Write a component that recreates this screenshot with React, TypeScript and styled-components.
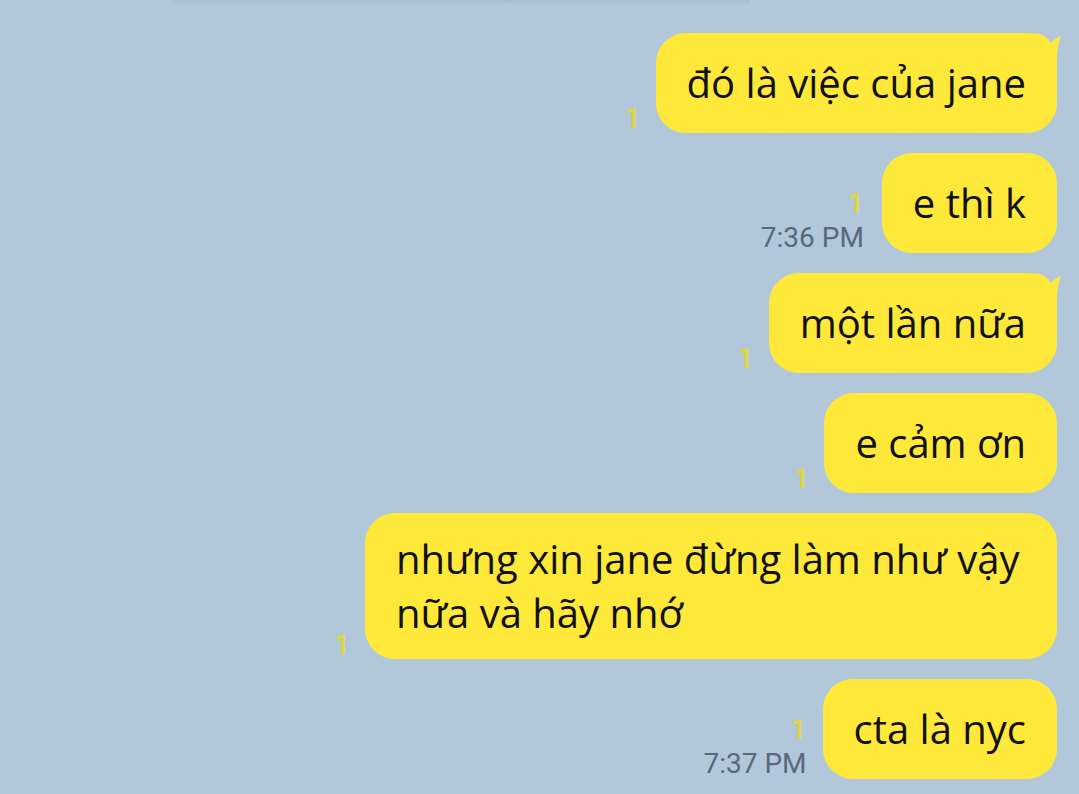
import React from 'react'
import styled, { createGlobalStyle } from 'styled-components'

const GlobalStyle = createGlobalStyle`
  html, body {
    margin: 0;
    padding: 0;
    background: #b2c7da;
  }
  body {
    font-family: 'Open Sans', 'Noto Sans', sans-serif;
  }
`

const Screen = styled.div`
  width: 1079px;
  height: 794px;
  background: #b2c7da;
  overflow: hidden;
  display: flex;
  flex-direction: column;
`

const Divider = styled.div`
  margin-left: 172px;
  width: 578px;
  height: 5px;
  background: linear-gradient(to bottom, rgba(120, 140, 155, 0.18), rgba(120, 140, 155, 0.02));
`

const Feed = styled.div`
  display: flex;
  flex-direction: column;
  align-items: flex-end;
  gap: 20px;
  padding: 28px 22px 0 0;
`

const Row = styled.div`
  display: flex;
  align-items: flex-end;
  justify-content: flex-end;
`

const Meta = styled.div<{ $gap: number }>`
  display: flex;
  flex-direction: column;
  align-items: flex-end;
  margin-right: ${p => p.$gap}px;
  padding-bottom: 0;
  font-family: Roboto, 'Liberation Sans', sans-serif;
`

const Unread = styled.span`
  color: #e3d73a;
  font-size: 28px;
  font-weight: 500;
  line-height: 28px;
`

const Time = styled.span`
  margin-top: 5px;
  color: #58697a;
  font-size: 28px;
  line-height: 30px;
`

const Bubble = styled.div`
  position: relative;
  box-sizing: border-box;
  min-height: 100px;
  max-width: 692px;
  padding: 19px 31px;
  display: flex;
  align-items: center;
  background: #fee93b;
  border-radius: 30px;
  color: #111;
  font-size: 40px;
  line-height: 54px;
`

const Tail = styled.svg`
  position: absolute;
  top: 0;
  right: -5px;
  width: 28px;
  height: 40px;
`

type Msg = { text: string; tail?: boolean; time?: string; gap?: number }

const messages: Msg[] = [
  { text: 'đó là việc của jane', tail: true, gap: 15 },
  { text: 'e thì k', time: '7:36 PM', gap: 18 },
  { text: 'một lần nữa', tail: true, gap: 15 },
  { text: 'e cảm ơn', gap: 15 },
  { text: 'nhưng xin jane đừng làm như vậy nữa và hãy nhớ', gap: 15 },
  { text: 'cta là nyc', time: '7:37 PM', gap: 16 },
]

export default function App() {
  return (
    <Screen>
      <GlobalStyle />
      <Divider />
      <Feed>
        {messages.map((m, i) => (
          <Row key={i}>
            <Meta $gap={m.gap ?? 15}>
              <Unread>1</Unread>
              {m.time && <Time>{m.time}</Time>}
            </Meta>
            <Bubble>
              {m.tail && (
                <Tail viewBox="0 0 28 40">
                  <path
                    d="M0 0 Q12 1 17 10 Q21 5 27 3 Q23 12 23 28 L23 40 L0 40 Z"
                    fill="#fee93b"
                  />
                </Tail>
              )}
              {m.text}
            </Bubble>
          </Row>
        ))}
      </Feed>
    </Screen>
  )
}
